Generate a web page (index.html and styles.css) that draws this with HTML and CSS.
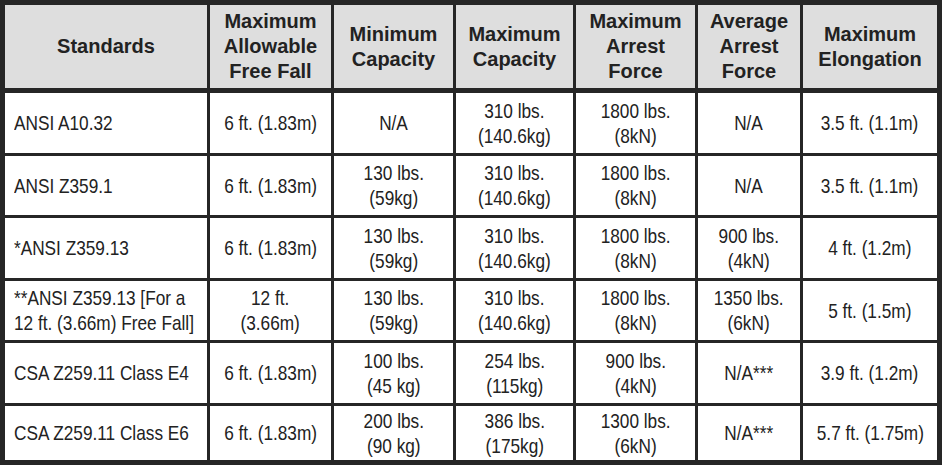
FILE: index.html
```html
<!DOCTYPE html>
<html>
<head>
<meta charset="utf-8">
<link rel="stylesheet" href="styles.css">
</head>
<body>
<table class="spec">
  <colgroup>
    <col class="c1"><col class="c2"><col class="c3"><col class="c4"><col class="c5"><col class="c6"><col class="c7">
  </colgroup>
  <thead>
    <tr>
      <th>Standards</th>
      <th>Maximum<br>Allowable<br>Free Fall</th>
      <th>Minimum<br>Capacity</th>
      <th>Maximum<br>Capacity</th>
      <th>Maximum<br>Arrest<br>Force</th>
      <th>Average<br>Arrest<br>Force</th>
      <th>Maximum<br>Elongation</th>
    </tr>
  </thead>
  <tbody>
    <tr>
      <td class="std"><span class="n">ANSI A10.32</span></td>
      <td><span class="n">6 ft. (1.83m)</span></td>
      <td><span class="n">N/A</span></td>
      <td><span class="n">310 lbs.<br>(140.6kg)</span></td>
      <td><span class="n">1800 lbs.<br>(8kN)</span></td>
      <td><span class="n">N/A</span></td>
      <td><span class="n">3.5 ft. (1.1m)</span></td>
    </tr>
    <tr>
      <td class="std"><span class="n">ANSI Z359.1</span></td>
      <td><span class="n">6 ft. (1.83m)</span></td>
      <td><span class="n">130 lbs.<br>(59kg)</span></td>
      <td><span class="n">310 lbs.<br>(140.6kg)</span></td>
      <td><span class="n">1800 lbs.<br>(8kN)</span></td>
      <td><span class="n">N/A</span></td>
      <td><span class="n">3.5 ft. (1.1m)</span></td>
    </tr>
    <tr>
      <td class="std"><span class="n">*ANSI Z359.13</span></td>
      <td><span class="n">6 ft. (1.83m)</span></td>
      <td><span class="n">130 lbs.<br>(59kg)</span></td>
      <td><span class="n">310 lbs.<br>(140.6kg)</span></td>
      <td><span class="n">1800 lbs.<br>(8kN)</span></td>
      <td><span class="n">900 lbs.<br>(4kN)</span></td>
      <td><span class="n">4 ft. (1.2m)</span></td>
    </tr>
    <tr>
      <td class="std"><span class="n">**ANSI Z359.13 [For a<br>12 ft. (3.66m) Free Fall]</span></td>
      <td><span class="n">12 ft.<br>(3.66m)</span></td>
      <td><span class="n">130 lbs.<br>(59kg)</span></td>
      <td><span class="n">310 lbs.<br>(140.6kg)</span></td>
      <td><span class="n">1800 lbs.<br>(8kN)</span></td>
      <td><span class="n">1350 lbs.<br>(6kN)</span></td>
      <td><span class="n">5 ft. (1.5m)</span></td>
    </tr>
    <tr>
      <td class="std"><span class="n">CSA Z259.11 Class E4</span></td>
      <td><span class="n">6 ft. (1.83m)</span></td>
      <td><span class="n">100 lbs.<br>(45 kg)</span></td>
      <td><span class="n">254 lbs.<br>(115kg)</span></td>
      <td><span class="n">900 lbs.<br>(4kN)</span></td>
      <td><span class="n">N/A***</span></td>
      <td><span class="n">3.9 ft. (1.2m)</span></td>
    </tr>
    <tr class="last">
      <td class="std"><span class="n">CSA Z259.11 Class E6</span></td>
      <td><span class="n">6 ft. (1.83m)</span></td>
      <td><span class="n">200 lbs.<br>(90 kg)</span></td>
      <td><span class="n">386 lbs.<br>(175kg)</span></td>
      <td><span class="n">1300 lbs.<br>(6kN)</span></td>
      <td><span class="n">N/A***</span></td>
      <td><span class="n">5.7 ft. (1.75m)</span></td>
    </tr>
  </tbody>
</table>
</body>
</html>
```
FILE: styles.css
```css
html, body {
  margin: 0;
  padding: 0;
  background: #ffffff;
}
.spec {
  border-collapse: collapse;
  width: 942px;
  table-layout: fixed;
  border: 5px solid #262626;
  color: #222222;
}
.c1 { width: 206px; }
.c2 { width: 124px; }
.c3 { width: 122px; }
.c4 { width: 120px; }
.c5 { width: 122px; }
.c6 { width: 105px; }
.c7 { width: 138px; }
.spec th {
  font-family: "Liberation Sans", Arial, sans-serif;
  font-weight: bold;
  font-size: 20px;
  line-height: 25px;
  background: #dedede;
  border: 3px solid #262626;
  border-bottom: 5px solid #262626;
  height: 83px;
  padding: 0;
  text-align: center;
  vertical-align: middle;
}
.spec td {
  font-family: "Liberation Sans", Arial, sans-serif;
  font-size: 21px;
  line-height: 25px;
  border: 3px solid #262626;
  height: 59.5px;
  padding: 0;
  text-align: center;
  vertical-align: middle;
  white-space: nowrap;
  overflow: visible;
}
.n {
  display: inline-block;
  transform: scaleX(0.82);
  transform-origin: 50% 50%;
}
.spec td.std {
  text-align: left;
  padding-left: 9px;
}
.spec td.std .n {
  transform-origin: 0 50%;
}
.spec tr.last td {
  height: 54.5px;
  border-bottom: 5px solid #262626;
}
```
